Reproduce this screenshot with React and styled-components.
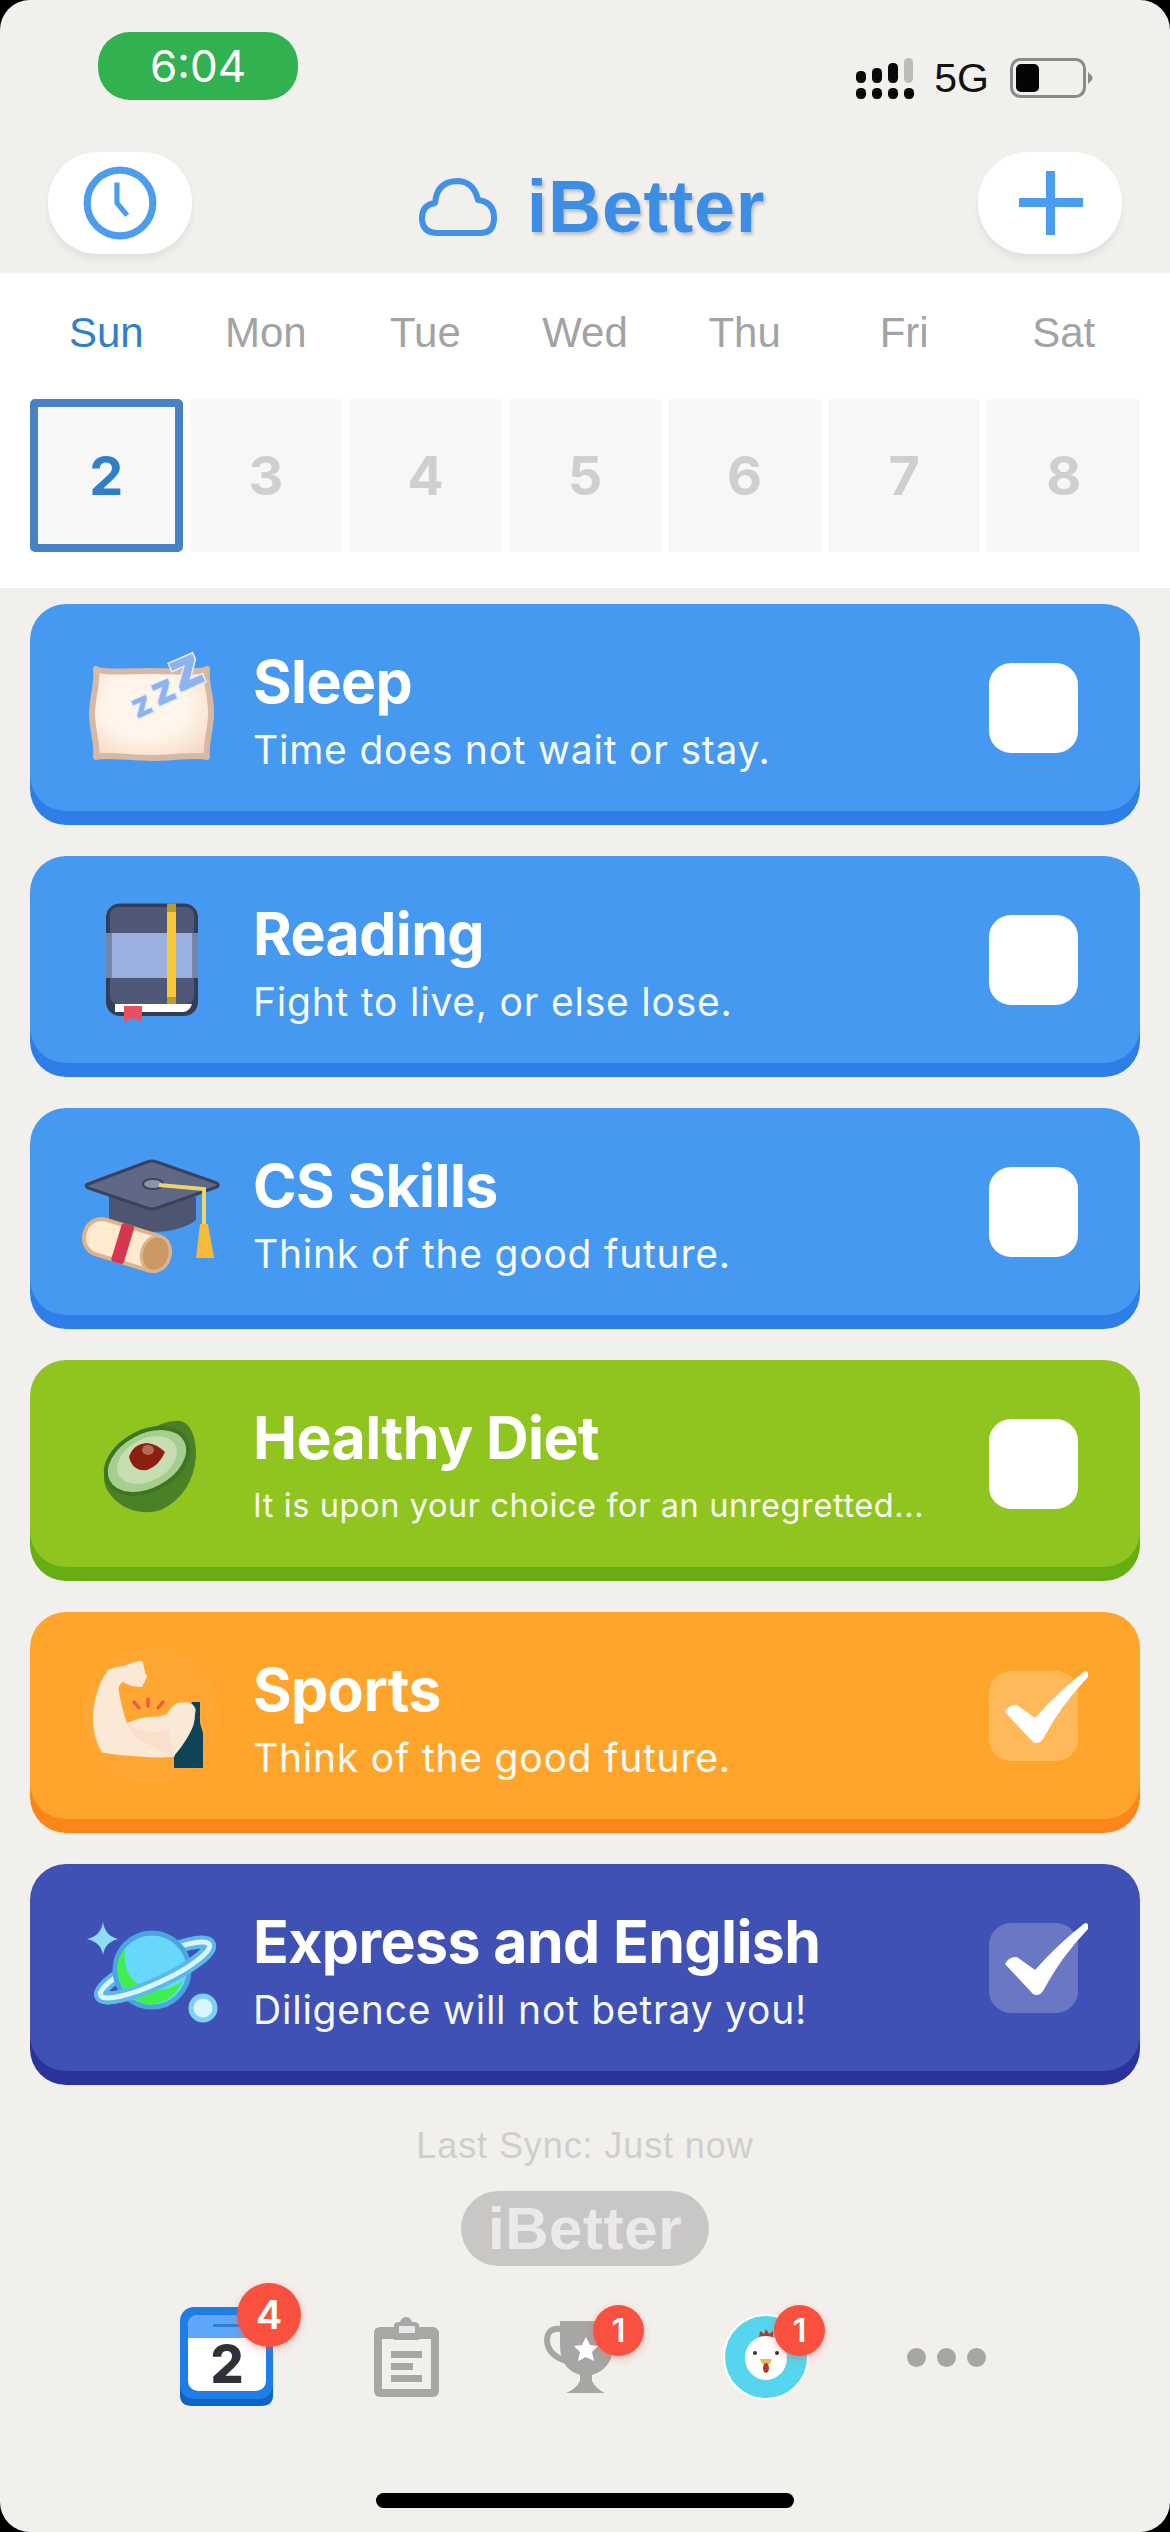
import React from 'react';
import styled, { createGlobalStyle } from 'styled-components';

const GlobalStyle = createGlobalStyle`
  html, body {
    margin: 0;
    padding: 0;
    background: #000000;
  }
  * {
    box-sizing: border-box;
  }
`;

const Screen = styled.div`
  width: 1170px;
  height: 2532px;
  overflow: hidden;
  display: flex;
  flex-direction: column;
  background: #f2f0ed;
  border-radius: 30px;
  font-family: Inter, "Liberation Sans", sans-serif;
`;

const StatusBar = styled.div`
  height: 152px;
  flex: none;
  display: flex;
  justify-content: space-between;
  align-items: flex-start;
  padding: 32px 76px 0 98px;
`;

const TimePill = styled.div`
  width: 200px;
  height: 68px;
  border-radius: 32px;
  background: #32b150;
  color: #ffffff;
  font-size: 44px;
  line-height: 68px;
  text-align: center;
`;

const StatusRight = styled.div`
  display: flex;
  align-items: center;
  margin-top: 25px;
`;

const Network = styled.span`
  font-family: "Liberation Sans", sans-serif;
  font-size: 41px;
  line-height: 41px;
  color: #111111;
  margin: 0 21px 0 18px;
`;

const Header = styled.div`
  height: 121px;
  flex: none;
  display: flex;
  justify-content: space-between;
  align-items: flex-start;
  padding: 0 48px;
`;

const RoundButton = styled.div`
  width: 144px;
  height: 102px;
  border-radius: 50px;
  background: #ffffff;
  box-shadow: 0 6px 6px rgba(0, 0, 0, 0.06);
  display: flex;
  align-items: center;
  justify-content: center;
`;

const Logo = styled.div`
  display: flex;
  align-items: center;
  gap: 29px;
  margin: 19px 0 0 13px;
`;

const LogoText = styled.span`
  font-family: "Liberation Sans", sans-serif;
  font-size: 73.5px;
  line-height: 72px;
  font-weight: 700;
  letter-spacing: 0.8px;
  color: #3b8de6;
  text-shadow: 2px 3px 3px rgba(40, 60, 90, 0.25);
`;

const Calendar = styled.div`
  height: 315px;
  flex: none;
  background: #ffffff;
  padding: 30px 30px 0;
  display: grid;
  grid-template-columns: repeat(7, 1fr);
  grid-template-rows: 60px 153px;
  column-gap: 7px;
  row-gap: 36px;
`;

const DayLabel = styled.div`
  font-family: "Liberation Sans", sans-serif;
  font-size: 42px;
  line-height: 60px;
  text-align: center;
  color: ${(p) => (p.$active ? '#2f80c8' : '#a3a3a3')};
`;

const DayCell = styled.div`
  background: #f7f7f7;
  border: ${(p) => (p.$active ? '8px solid #4a81c6' : 'none')};
  border-radius: ${(p) => (p.$active ? '5px' : '2px')};
  display: flex;
  align-items: center;
  justify-content: center;
  font-size: 54px;
  line-height: 64px;
  font-weight: 700;
  color: ${(p) => (p.$active ? '#2f80c8' : '#cfcfcf')};
`;

const TaskList = styled.div`
  padding: 16px 30px 0;
  display: flex;
  flex-direction: column;
  gap: 45px;
`;

const Card = styled.div`
  height: 207px;
  border-radius: 36px;
  background: ${(p) => p.$bg};
  box-shadow: 0 14px 0 ${(p) => p.$lip};
  display: flex;
  align-items: center;
  padding: 0 62px 0 51px;
`;

const CardIcon = styled.svg`
  width: 140px;
  height: 140px;
  flex: none;
  overflow: visible;
`;

const CardText = styled.div`
  flex: 1;
  min-width: 0;
  margin: 6px 0 0 32px;
  color: #ffffff;
`;

const CardTitle = styled.div`
  font-size: 59px;
  line-height: 68px;
  font-weight: 700;
  letter-spacing: -0.6px;
`;

const CardSub = styled.div`
  margin-top: 10px;
  font-size: ${(p) => (p.$small ? '32.5px' : '39px')};
  line-height: 48px;
  letter-spacing: ${(p) => (p.$small ? '0.6px' : '0.78px')};
  font-weight: 400;
  white-space: nowrap;
  opacity: 0.96;
`;

const CheckBox = styled.div`
  width: 89px;
  height: 90px;
  flex: none;
  position: relative;
  border-radius: 22px;
  background: ${(p) => (p.$done ? 'rgba(255, 255, 255, 0.22)' : '#ffffff')};
`;

const CheckMark = styled.svg`
  position: absolute;
  left: 0;
  top: 0;
  width: 100px;
  height: 76px;
`;

const SyncText = styled.div`
  margin-top: 50px;
  font-family: "Liberation Sans", sans-serif;
  font-size: 36px;
  line-height: 50px;
  letter-spacing: 0.9px;
  text-align: center;
  color: #d0cecc;
`;

const BrandPill = styled.div`
  align-self: center;
  margin-top: 20px;
  width: 248px;
  height: 75px;
  border-radius: 38px;
  background: #c9c7c6;
  color: #eceae8;
  font-family: "Liberation Sans", sans-serif;
  font-size: 60px;
  font-weight: 700;
  line-height: 75px;
  letter-spacing: 0.6px;
  text-align: center;
`;

const TabBar = styled.div`
  margin-top: 41px;
  padding: 0 134px 0 136px;
  display: flex;
`;

const Tab = styled.div`
  width: 180px;
  height: 100px;
  position: relative;
  display: flex;
  align-items: center;
  justify-content: center;
`;

const TabIcon = styled.svg`
  width: 100px;
  height: 100px;
`;

const Badge = styled.div`
  position: absolute;
  left: ${(p) => p.$left}px;
  top: ${(p) => p.$top}px;
  width: ${(p) => p.$size}px;
  height: ${(p) => p.$size}px;
  border-radius: 50%;
  background: #f9503f;
  box-shadow: 0 3px 8px rgba(249, 80, 63, 0.35);
  color: #ffffff;
  font-size: ${(p) => (p.$size > 55 ? '40px' : '33px')};
  font-weight: 600;
  line-height: ${(p) => p.$size}px;
  text-align: center;
`;

const Dots = styled.div`
  display: flex;
  gap: 11px;
`;

const Dot = styled.span`
  width: 19px;
  height: 19px;
  border-radius: 50%;
  background: #a8a6a4;
`;

const HomeBar = styled.div`
  align-self: center;
  margin-top: 86px;
  width: 418px;
  height: 15px;
  border-radius: 8px;
  background: #000000;
`;

function SignalIcon() {
  const bars = [
    [0, 70, 10, 12],
    [16, 67, 10, 15],
    [32, 62, 10, 20],
    [48, 57, 9, 25],
  ];
  return (
    <svg width="60" height="42" viewBox="0 56 60 42">
      {bars.map(([x, y, w, h], i) => (
        <rect key={i} x={x} y={y} width={w} height={h} rx="4.5" fill={i === 3 ? '#bdbcba' : '#0a0a0a'} />
      ))}
      {[0, 16, 32, 48].map((x) => (
        <rect key={x} x={x} y="87" width="10" height="11" rx="4.5" fill="#0a0a0a" />
      ))}
    </svg>
  );
}

function BatteryIcon() {
  return (
    <svg width="84" height="40" viewBox="0 0 84 40">
      <rect x="1.5" y="1.5" width="73" height="37" rx="9" fill="none" stroke="#8b8a88" strokeWidth="3" />
      <rect x="6" y="6" width="23" height="28" rx="5" fill="#050505" />
      <path d="M78 14 L82 18 Q83 20 82 22 L78 26 Z" fill="#8b8a88" />
    </svg>
  );
}

function ClockIcon() {
  return (
    <svg width="78" height="78" viewBox="0 0 76 76" fill="none" stroke="#4c9df0">
      <circle cx="38" cy="38" r="32" strokeWidth="7" />
      <path d="M35 18 L35 38 L45 50" strokeWidth="5" strokeLinejoin="round" />
    </svg>
  );
}

function PlusIcon() {
  return (
    <svg width="64" height="64" viewBox="0 0 64 64" fill="#4a9cf0" style={{ marginLeft: 3 }}>
      <rect x="27" y="0" width="9" height="64" />
      <rect x="0" y="27" width="64" height="9" />
    </svg>
  );
}

function CloudIcon() {
  return (
    <svg width="80" height="60" viewBox="0 0 80 60" fill="none">
      <path
        d="M20 56 Q4 56 4 41 Q4 28 17 26 Q19 4 40 4 Q56 5 60 23 Q76 25 76 41 Q76 56 62 56 Z"
        stroke="#4191e8"
        strokeWidth="6"
        strokeLinejoin="round"
      />
    </svg>
  );
}

function PillowIcon() {
  return (
    <CardIcon viewBox="0 0 140 140">
      <defs>
        <radialGradient id="pillowFill" cx="45%" cy="42%" r="65%">
          <stop offset="55%" stopColor="#fff5ea" />
          <stop offset="100%" stopColor="#f6dcc8" />
        </radialGradient>
      </defs>
      <path
        d="M15 31 C20 35 50 33 70 33 C90 33 120 35 126 31 C124 45 131 60 130 76 C130 92 124 106 126 119 C115 116 90 120 70 120 C50 120 25 116 15 119 C17 106 11 92 11 76 C11 60 17 45 15 31 Z"
        fill="url(#pillowFill)"
        stroke="#d6b8a5"
        strokeWidth="6"
        strokeLinejoin="round"
      />
      <g fontFamily="Inter, sans-serif" fontWeight="800" fill="#8fb3ee" stroke="#e6eefb" strokeWidth="3" paintOrder="stroke">
        <text x="50" y="78" fontSize="34" transform="rotate(-24 60 66)">z</text>
        <text x="70" y="66" fontSize="40" transform="rotate(-24 80 52)">z</text>
        <text x="88" y="50" fontSize="56" transform="rotate(-24 105 31)">z</text>
      </g>
    </CardIcon>
  );
}

function BookIcon() {
  return (
    <CardIcon viewBox="0 0 140 140">
      <rect x="25" y="13.5" width="92" height="112.5" rx="14" fill="#353d54" />
      <rect x="29" y="17" width="84" height="97" rx="8" fill="#4f5878" />
      <rect x="25" y="43" width="92" height="45" fill="#7485a9" />
      <rect x="31" y="43" width="80" height="45" fill="#9bb0de" />
      <rect x="86" y="13.5" width="9" height="101" fill="#b79a34" />
      <rect x="86" y="22" width="9" height="85" fill="#f9c733" />
      <path d="M34 114 H111 Q108 122 102 122 H34 Z" fill="#ffffff" />
      <path d="M43 116 H61 V132 L52 128 L43 132 Z" fill="#e8505f" />
    </CardIcon>
  );
}

function CapIcon() {
  return (
    <CardIcon viewBox="0 0 140 140">
      <path d="M28 55 H115 V78 Q100 90 70 90 Q42 90 28 78 Z" fill="#4d5570" />
      <path d="M6 42.5 L66 20 Q71 18 76 20 L136 41 Q138 43 136 45 L76 66 Q71 68 66 66 L7 46 Q4 44 6 42.5 Z" fill="#5f6886" stroke="#3a415b" strokeWidth="3" />
      <ellipse cx="72" cy="42" rx="10" ry="5" fill="#8e93a3" stroke="#3a415b" strokeWidth="2" />
      <path d="M78 43 L123 47 V84" fill="none" stroke="#f3d468" strokeWidth="4" />
      <path d="M119 82 H127 L133 116 H115 Z" fill="#f5b93b" />
      <g transform="rotate(17 46 103)">
        <rect x="2" y="85" width="88" height="36" rx="17" fill="#fdeacf" stroke="#dcb38d" strokeWidth="4" />
        <rect x="35" y="83" width="13" height="40" rx="3" fill="#d6374f" />
        <ellipse cx="76" cy="103" rx="14" ry="18" fill="#c99865" stroke="#dcb38d" strokeWidth="3" />
      </g>
    </CardIcon>
  );
}

function AvocadoIcon() {
  return (
    <CardIcon viewBox="0 0 140 140">
      <path d="M23 85 Q30 62 62 40 Q84 25 100 27 Q115 32 115 62 Q112 100 80 116 Q60 122 42 112 Q24 100 23 85 Z" fill="#4a8126" />
      <ellipse cx="66" cy="67" rx="44" ry="29" transform="rotate(-28 66 67)" fill="#a6ce8e" stroke="#3b7620" strokeWidth="4" />
      <ellipse cx="66" cy="66" rx="32" ry="21" transform="rotate(-28 66 66)" fill="#c7deb2" />
      <path d="M48 63 Q52 50 66 49 Q76 50 84 58 Q78 72 66 76 Q52 78 48 63 Z" fill="#8c1f10" />
      <ellipse cx="67" cy="56" rx="6" ry="5" fill="#b56a5e" />
    </CardIcon>
  );
}

function MuscleIcon() {
  return (
    <CardIcon viewBox="0 0 140 140">
      <circle cx="70" cy="69" r="68" fill="#ffffff" fillOpacity="0.03" />
      <path d="M111 56 H119 V77 L122 87 V122 H93 V112 Z" fill="#0f4358" />
      <path d="M27 24 Q34 21 42 20 L56 15.5 Q62 14 62 17 L64 26 L66 31 L61 41 Q54 41 49 39.6 L42 36 Q36 40 38 46 Q40 60 46 77 Q60 71 69 71 Q80 71 86 68 Q92 58 97 57 Q106 55 111 58 Q116 62 114 68 Q114 78 109 87 Q102 100 92 111 Q76 112 59 110.5 Q40 110 21 106.5 Q12 92 12 72 Q13 44 27 24 Z" fill="#fbe9d8" />
      <path d="M46 77 Q60 90 88 84 L92 111 Q76 104 62 96 Q50 90 46 77 Z" fill="#f6dcc6" fillOpacity="0.7" />
      <g stroke="#f4574a" strokeWidth="3.5" strokeLinecap="round">
        <path d="M53 56 L58 62" />
        <path d="M67 53 L67 60" />
        <path d="M82 56 L77 62" />
      </g>
    </CardIcon>
  );
}

function PlanetIcon() {
  return (
    <CardIcon viewBox="0 0 140 140">
      <path d="M22 24 Q24 38 37 41 Q24 44 22 57 Q20 44 6 41 Q20 38 22 24 Z" fill="#8fdcf7" />
      <g transform="rotate(-25 74 72)" fill="none">
        <ellipse cx="74" cy="72" rx="60" ry="13" stroke="#5ab8ea" strokeWidth="13" />
        <ellipse cx="74" cy="72" rx="60" ry="13" stroke="#d9f6fe" strokeWidth="5" />
      </g>
      <circle cx="71" cy="72" r="37" fill="#67d8fb" stroke="#4aa6e0" strokeWidth="5" />
      <path d="M44 50 Q40 86 72 92 Q92 92 102 82 Q92 106 66 107 Q40 98 36 72 Q36 60 44 50 Z" fill="#3fef4e" />
      <g transform="rotate(-25 74 72)" fill="none">
        <path d="M14 72 A60 13 0 0 0 134 72" stroke="#5ab8ea" strokeWidth="13" />
        <path d="M14 72 A60 13 0 0 0 134 72" stroke="#d9f6fe" strokeWidth="5" />
      </g>
      <circle cx="122" cy="110" r="12" fill="#d8f5fe" stroke="#7fd0f5" strokeWidth="5" />
    </CardIcon>
  );
}

function CalendarTab() {
  return (
    <TabIcon viewBox="0 0 100 100">
      <path d="M4 72 V88 Q4 99 16 99 H85 Q97 99 97 88 V72 Z" fill="#0f63c4" />
      <rect x="4" y="0" width="93" height="92" rx="14" fill="#1d7fe6" />
      <rect x="12" y="8" width="78" height="76" rx="10" fill="#ffffff" />
      <path d="M12 31 V18 Q12 8 22 8 H80 Q90 8 90 18 V31 Z" fill="#5ea6fa" />
      <rect x="37" y="17" width="26" height="3" fill="#2f7fd0" />
      <text x="51" y="76" fontFamily="Inter, sans-serif" fontSize="52" fontWeight="800" fill="#2e3238" textAnchor="middle">2</text>
    </TabIcon>
  );
}

function ClipboardTab() {
  return (
    <TabIcon viewBox="0 0 100 100">
      <rect x="18" y="20" width="65" height="70" rx="6" fill="#a7a7a5" />
      <rect x="26" y="32" width="49" height="50" fill="#f2f0ed" />
      <path d="M38 18 Q38 15 44 15 Q46 10 50 10 Q54 10 56 15 Q63 15 63 18 V33 H38 Z" fill="#a7a7a5" />
      <rect x="43" y="19" width="16" height="7" fill="#e9e8e6" />
      <rect x="35" y="44" width="31" height="7" fill="#a7a7a5" />
      <rect x="35" y="56" width="22" height="7" fill="#a7a7a5" />
      <rect x="35" y="68" width="31" height="7" fill="#a7a7a5" />
    </TabIcon>
  );
}

function TrophyTab() {
  return (
    <TabIcon viewBox="0 0 100 100">
      <path d="M25 22 Q11 20 11 34 Q12 48 30 54" fill="none" stroke="#a7a6a4" strokeWidth="6" />
      <path d="M24 14 H78 V38 Q76 62 56 68 V74 Q60 82 69 86 H30 Q40 82 44 74 V68 Q24 62 24 38 Z" fill="#a7a6a4" />
      <path d="M50 30 L54 38 L62 39 L56 45 L58 54 L50 50 L42 54 L44 45 L38 39 L46 38 Z" fill="#ffffff" />
    </TabIcon>
  );
}

function ChickenTab() {
  return (
    <TabIcon viewBox="0 0 100 100">
      <circle cx="50" cy="50" r="42" fill="#55d6ee" stroke="#ffffff" strokeWidth="2" />
      <path d="M43 31 L44 24 L48 27 L50 22 L53 27 L57 24 L57 31 Z" fill="#b3392a" />
      <ellipse cx="50" cy="51" rx="21" ry="22" fill="#ffffff" />
      <circle cx="39" cy="46" r="2" fill="#333333" />
      <circle cx="61" cy="46" r="2" fill="#333333" />
      <path d="M44 52 H56 L54 57 H46 Z" fill="#f5b93b" />
      <ellipse cx="50" cy="61" rx="3" ry="5" fill="#b3392a" />
    </TabIcon>
  );
}

const tasks = [
  { title: 'Sleep', sub: 'Time does not wait or stay.', bg: '#4699f1', lip: '#2f7ee8', Icon: PillowIcon },
  { title: 'Reading', sub: 'Fight to live, or else lose.', bg: '#4699f1', lip: '#2f7ee8', Icon: BookIcon },
  { title: 'CS Skills', sub: 'Think of the good future.', bg: '#4699f1', lip: '#2f7ee8', Icon: CapIcon },
  { title: 'Healthy Diet', sub: 'It is upon your choice for an unregretted...', small: true, bg: '#90c41f', lip: '#66ae12', Icon: AvocadoIcon },
  { title: 'Sports', sub: 'Think of the good future.', done: true, bg: '#ffa52c', lip: '#fd861b', Icon: MuscleIcon },
  { title: 'Express and English', sub: 'Diligence will not betray you!', done: true, bg: '#3f51b5', lip: '#2a339b', Icon: PlanetIcon },
];

const days = [
  ['Sun', 2],
  ['Mon', 3],
  ['Tue', 4],
  ['Wed', 5],
  ['Thu', 6],
  ['Fri', 7],
  ['Sat', 8],
];

export default function App() {
  return (
    <Screen>
      <GlobalStyle />
      <StatusBar>
        <TimePill>6:04</TimePill>
        <StatusRight>
          <SignalIcon />
          <Network>5G</Network>
          <BatteryIcon />
        </StatusRight>
      </StatusBar>
      <Header>
        <RoundButton>
          <ClockIcon />
        </RoundButton>
        <Logo>
          <CloudIcon />
          <LogoText>iBetter</LogoText>
        </Logo>
        <RoundButton>
          <PlusIcon />
        </RoundButton>
      </Header>
      <Calendar>
        {days.map(([name], i) => (
          <DayLabel key={name} $active={i === 0}>{name}</DayLabel>
        ))}
        {days.map(([name, num], i) => (
          <DayCell key={name} $active={i === 0}>{num}</DayCell>
        ))}
      </Calendar>
      <TaskList>
        {tasks.map(({ title, sub, small, done, bg, lip, Icon }) => (
          <Card key={title} $bg={bg} $lip={lip}>
            <Icon />
            <CardText>
              <CardTitle>{title}</CardTitle>
              <CardSub $small={small}>{sub}</CardSub>
            </CardText>
            <CheckBox $done={done}>
              {done && (
                <CheckMark viewBox="0 0 100 76">
                  <path d="M16 41 Q20 33 28 34 L46 47 Q70 20 96 0 L99 1 L99 6 Q72 34 54 68 Q50 74 44 71 Z" fill="#ffffff" />
                </CheckMark>
              )}
            </CheckBox>
          </Card>
        ))}
      </TaskList>
      <SyncText>Last Sync: Just now</SyncText>
      <BrandPill>iBetter</BrandPill>
      <TabBar>
        <Tab>
          <CalendarTab />
          <Badge $left={101} $top={-24} $size={64}>4</Badge>
        </Tab>
        <Tab>
          <ClipboardTab />
        </Tab>
        <Tab>
          <TrophyTab />
          <Badge $left={97} $top={-2} $size={51}>1</Badge>
        </Tab>
        <Tab>
          <ChickenTab />
          <Badge $left={98} $top={-2} $size={51}>1</Badge>
        </Tab>
        <Tab>
          <Dots>
            <Dot />
            <Dot />
            <Dot />
          </Dots>
        </Tab>
      </TabBar>
      <HomeBar />
    </Screen>
  );
}
